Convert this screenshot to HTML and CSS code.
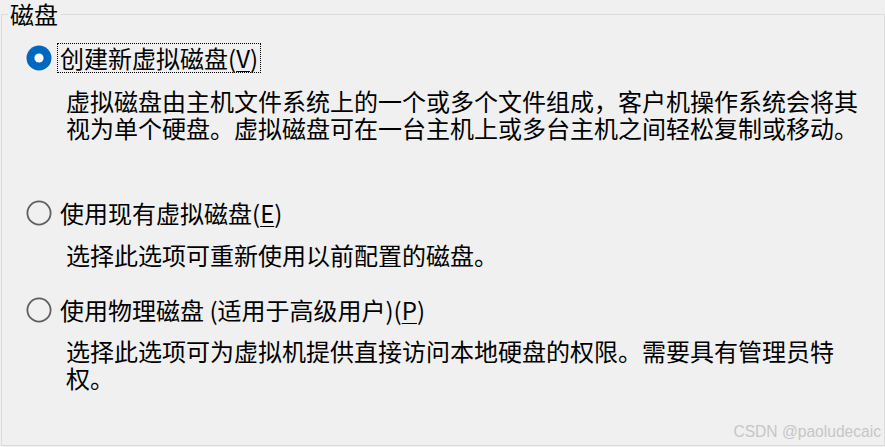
FILE: index.html
```html
<!DOCTYPE html>
<html lang="zh-CN">
<head>
<meta charset="utf-8">
<title>磁盘</title>
<link rel="stylesheet" href="styles.css">
</head>
<body>
<fieldset class="group">
  <legend class="group-title">磁盘</legend>

  <div class="option option-first">
    <div class="radio-row">
      <svg class="radio" width="26" height="26" viewBox="0 0 26 26"><circle cx="13" cy="13" r="12.5" fill="#0067c0"/><circle cx="13" cy="13" r="4.6" fill="#fff"/></svg>
      <span class="label focused">创建新虚拟磁盘(<u>V</u>)</span>
    </div>
    <p class="desc">虚拟磁盘由主机文件系统上的一个或多个文件组成，客户机操作系统会将其视为单个硬盘。虚拟磁盘可在一台主机上或多台主机之间轻松复制或移动。</p>
  </div>

  <div class="option option-second">
    <div class="radio-row">
      <svg class="radio" width="26" height="26" viewBox="0 0 26 26"><circle cx="13" cy="13" r="11.6" fill="none" stroke="#5f5f5f" stroke-width="1.8"/></svg>
      <span class="label">使用现有虚拟磁盘(<u>E</u>)</span>
    </div>
    <p class="desc">选择此选项可重新使用以前配置的磁盘。</p>
  </div>

  <div class="option option-third">
    <div class="radio-row">
      <svg class="radio" width="26" height="26" viewBox="0 0 26 26"><circle cx="13" cy="13" r="11.6" fill="none" stroke="#5f5f5f" stroke-width="1.8"/></svg>
      <span class="label">使用物理磁盘 (适用于高级用户)(<u>P</u>)</span>
    </div>
    <p class="desc">选择此选项可为虚拟机提供直接访问本地硬盘的权限。需要具有管理员特权。</p>
  </div>
</fieldset>
<div class="watermark">CSDN @paoludecaic</div>
</body>
</html>
```
FILE: styles.css
```css
html, body {
  margin: 0;
  padding: 0;
}
body {
  width: 885px;
  height: 447px;
  overflow: hidden;
  position: relative;
  background: #f0f0f0;
  color: #000;
  font-family: "Noto Sans CJK SC", "Noto Sans", sans-serif;
  font-size: 24px;
}
.group {
  box-sizing: border-box;
  margin: 0 0 0 1px;
  width: 884px;
  height: 446px;
  border: 1px solid #dcdcdc;
  padding: 0;
  min-width: 0;
}
.group-title {
  margin-left: 6px;
  padding: 0 3px 0 2px;
  line-height: 28px;
  font-size: 24px;
}
.option {
  display: flex;
  flex-direction: column;
}
.option-first { margin-top: 15px; }
.option-second { margin-top: 57px; }
.option-third { margin-top: 27px; }
.radio-row {
  display: flex;
  align-items: center;
  height: 30px;
  padding-left: 24px;
  gap: 5px;
}
.radio {
  flex: none;
  display: block;
}
.label {
  box-sizing: border-box;
  height: 30px;
  line-height: 28px;
  padding: 0 2px;
  border: 1px solid transparent;
  white-space: nowrap;
}
.label.focused {
  border: 1px dotted #000;
}
.label u {
  text-underline-offset: 3px;
  text-decoration-thickness: 1px;
}
.desc {
  margin: 13px 0 0 0;
  padding-left: 64px;
  width: 800px;
  line-height: 27px;
}
.option-first .desc { margin-top: 14px; }
.option-third .desc { margin-top: 12px; }
.watermark {
  position: absolute;
  top: 424px;
  right: 4px;
  font-family: "Liberation Sans", Arial, sans-serif;
  font-size: 15.6px;
  line-height: 16px;
  color: #c6c6c6;
}
```
